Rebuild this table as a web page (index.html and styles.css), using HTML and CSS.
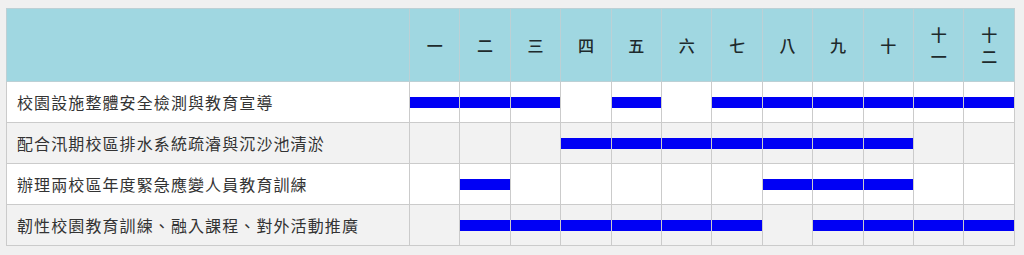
FILE: index.html
```html
<!DOCTYPE html>
<html lang="zh-Hant">
<head>
<meta charset="utf-8">
<title>工作進度</title>
<link rel="stylesheet" href="styles.css">
</head>
<body>
<table class="plan">
  <colgroup>
    <col class="col-task">
    <col span="12">
  </colgroup>
  <thead>
    <tr class="head-row">
      <th class="task-head"></th>
      <th class="month">一</th>
      <th class="month">二</th>
      <th class="month">三</th>
      <th class="month">四</th>
      <th class="month">五</th>
      <th class="month">六</th>
      <th class="month">七</th>
      <th class="month">八</th>
      <th class="month">九</th>
      <th class="month">十</th>
      <th class="month">十一</th>
      <th class="month">十二</th>
    </tr>
  </thead>
  <tbody>
    <tr class="row">
      <td class="task">校園設施整體安全檢測與教育宣導</td>
      <td class="cell"><div class="bar"></div></td>
      <td class="cell"><div class="bar"></div></td>
      <td class="cell"><div class="bar"></div></td>
      <td class="cell"></td>
      <td class="cell"><div class="bar"></div></td>
      <td class="cell"></td>
      <td class="cell"><div class="bar"></div></td>
      <td class="cell"><div class="bar"></div></td>
      <td class="cell"><div class="bar"></div></td>
      <td class="cell"><div class="bar"></div></td>
      <td class="cell"><div class="bar"></div></td>
      <td class="cell"><div class="bar"></div></td>
    </tr>
    <tr class="row alt">
      <td class="task">配合汛期校區排水系統疏濬與沉沙池清淤</td>
      <td class="cell"></td>
      <td class="cell"></td>
      <td class="cell"></td>
      <td class="cell"><div class="bar"></div></td>
      <td class="cell"><div class="bar"></div></td>
      <td class="cell"><div class="bar"></div></td>
      <td class="cell"><div class="bar"></div></td>
      <td class="cell"><div class="bar"></div></td>
      <td class="cell"><div class="bar"></div></td>
      <td class="cell"><div class="bar"></div></td>
      <td class="cell"></td>
      <td class="cell"></td>
    </tr>
    <tr class="row">
      <td class="task">辦理兩校區年度緊急應變人員教育訓練</td>
      <td class="cell"></td>
      <td class="cell"><div class="bar"></div></td>
      <td class="cell"></td>
      <td class="cell"></td>
      <td class="cell"></td>
      <td class="cell"></td>
      <td class="cell"></td>
      <td class="cell"><div class="bar"></div></td>
      <td class="cell"><div class="bar"></div></td>
      <td class="cell"><div class="bar"></div></td>
      <td class="cell"></td>
      <td class="cell"></td>
    </tr>
    <tr class="row alt">
      <td class="task">韌性校園教育訓練、融入課程、對外活動推廣</td>
      <td class="cell"></td>
      <td class="cell"><div class="bar"></div></td>
      <td class="cell"><div class="bar"></div></td>
      <td class="cell"><div class="bar"></div></td>
      <td class="cell"><div class="bar"></div></td>
      <td class="cell"><div class="bar"></div></td>
      <td class="cell"><div class="bar"></div></td>
      <td class="cell"></td>
      <td class="cell"><div class="bar"></div></td>
      <td class="cell"><div class="bar"></div></td>
      <td class="cell"><div class="bar"></div></td>
      <td class="cell"><div class="bar"></div></td>
    </tr>
  </tbody>
</table>
</body>
</html>
```

FILE: styles.css
```css
html, body {
  margin: 0;
  padding: 0;
  background: #f0f0f0;
}

body {
  padding: 8px 0 0 6px;
  font-family: "Noto Sans CJK TC", "Noto Sans", sans-serif;
}

.plan {
  width: 1009px;
  table-layout: fixed;
  border-collapse: collapse;
  border: 1px solid #c8c8c8;
}

.col-task {
  width: 403px;
}

.head-row {
  height: 73px;
  background: #a0d7e1;
}

.head-row th {
  border: 1px solid #bcd0d5;
  padding: 0;
}

.month {
  padding: 0 10px;
  font-size: 16px;
  line-height: 22px;
  font-weight: 500;
  color: #1e2a2c;
  text-align: center;
  vertical-align: middle;
}

.head-row th.month {
  padding: 0 10px;
}

.row {
  height: 41px;
  background: #ffffff;
}

.row.alt {
  background: #f2f2f2;
}

.row td {
  border: 1px solid #cbcbcb;
  padding: 0;
  vertical-align: middle;
}

.task {
  padding: 0 0 0 10px;
  font-size: 16px;
  letter-spacing: 1.1px;
  color: #333333;
  white-space: nowrap;
}

.row td.task {
  padding-left: 10px;
}

.bar {
  height: 11px;
  background: #0000f5;
}
```
